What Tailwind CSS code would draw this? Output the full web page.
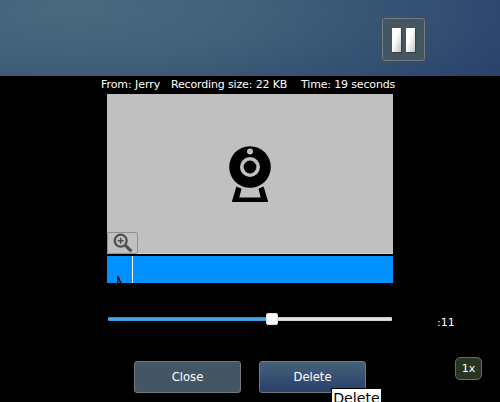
<!DOCTYPE html>
<html lang="en">
<head>
<meta charset="utf-8">
<title>Recording playback</title>
<script src="https://cdn.jsdelivr.net/npm/@tailwindcss/browser@4"></script>
</head>
<body class="bg-black">
<main class="relative flex h-[402px] w-[500px] flex-col overflow-hidden bg-black font-['DejaVu_Sans',sans-serif] text-white">
  <header class="flex h-[76px] shrink-0 justify-end bg-[radial-gradient(ellipse_500px_140px_at_75px_10px,#4a6a80_0%,#42607a_35%,#334f71_72%,#27406b_100%)] pt-[18px] pr-[75px]">
    <button class="flex size-[43px] items-center justify-center gap-[5px] rounded-[3px] border border-[#777b7e] bg-[#445661]" aria-label="Pause">
      <span class="h-6 w-[9px] bg-linear-to-br from-white from-40% to-[#c4c4c4] shadow-[1px_1px_1px_#33414a]"></span>
      <span class="h-6 w-[9px] bg-linear-to-br from-white from-40% to-[#c4c4c4] shadow-[1px_1px_1px_#33414a]"></span>
    </button>
  </header>
  <div class="flex h-[18px] shrink-0 pl-[101px] text-[11px] leading-[17px] whitespace-nowrap">
    <span class="w-[70px] tracking-[-0.06px]">From: Jerry</span>
    <span class="w-[130px] tracking-[-0.15px]">Recording size: 22 KB</span>
    <span class="tracking-[-0.15px]">Time: 19 seconds</span>
  </div>
  <section class="mx-[107px] flex h-[160px] shrink-0 flex-col border-b border-[#d4d4d4] bg-[#c0c0c0]">
    <svg class="mt-[51px] ml-[121px] shrink-0" width="44" height="59" viewBox="0 0 44 59">
      <circle cx="22" cy="22" r="20.8"/>
      <circle cx="22" cy="22" r="8.2" fill="none" stroke="#c0c0c0" stroke-width="3.6"/>
      <circle cx="22" cy="6.6" r="3" fill="#c0c0c0"/>
      <path d="M8.4 41.6 13.5 43.8 11.3 52.4H32.7L30.5 43.8 35.6 41.6 40.2 57H3.8Z"/>
    </svg>
    <button class="mt-[28px] flex h-[22px] w-[31px] shrink-0 items-center justify-center rounded-[2px] border border-[#909090]" aria-label="Zoom in">
      <svg width="20" height="20" viewBox="0 0 20 20" fill="none" stroke="#505050">
        <circle cx="7.7" cy="7.7" r="6" stroke-width="2.3"/>
        <path d="M4.7 7.7h6M7.7 4.7v6" stroke-width="1.6"/>
        <path d="M12.3 12.3 18.5 18.3" stroke-width="3"/>
      </svg>
    </button>
  </section>
  <div class="mx-[107px] mt-[2px] flex h-[27px] shrink-0 bg-[#0090ff]">
    <svg class="mt-[19px] ml-[9px]" width="7" height="8" viewBox="0 0 7 8"><path d="M1.7 8V1L5 8" fill="#466392" stroke="#000" stroke-width="1.2"/></svg>
    <span class="ml-[9px] w-px bg-white"></span>
  </div>
  <div class="mt-[30px] flex h-[19px] shrink-0 pl-[108px]">
    <div class="flex h-[12px] w-[284px] items-center">
      <span class="h-[4px] w-[158px] rounded-l-[1px] bg-linear-to-b from-[#268acb] via-[#4aaded] to-[#3097d8]"></span>
      <span class="h-3 w-3 rounded-[2px] border border-[#ddd] bg-[#fcfcfc]"></span>
      <span class="h-[4px] grow rounded-r-[1px] bg-linear-to-b from-[#bbb] via-[#eee] to-[#ccc]"></span>
    </div>
    <span class="mt-[3px] ml-[45px] text-[11px] leading-[14px]">:11</span>
  </div>
  <div class="mt-[25px] flex h-[45px] shrink-0 pl-[134px] text-[11.6px]">
    <button class="mt-[4px] h-[32px] w-[107px] rounded-[3px] border border-[#747a7e] bg-[#445663] pt-px">Close</button>
    <button class="mt-[4px] ml-[18px] h-[32px] w-[107px] rounded-[3px] border border-[#747a80] bg-linear-to-b from-[#466179] to-[#29406a] pt-px">Delete</button>
    <button class="ml-[89px] h-[23px] w-[27px] rounded-[5px] border border-[#66705f] bg-[#263620] pt-px text-[11px]">1x</button>
  </div>
  <div class="absolute top-[388px] left-[331px] h-[20px] w-[51px] border border-black bg-white text-center text-[14.2px] leading-[18px] text-black">Delete</div>
</main>
</body>
</html>
